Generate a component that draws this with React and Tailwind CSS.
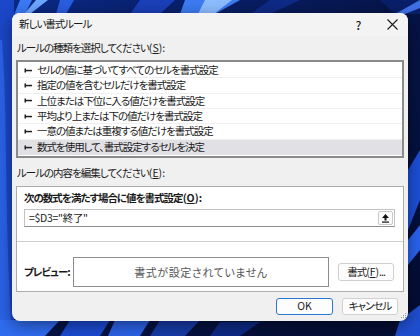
import React from "react";

const font = "[font-family:'Noto_Sans_CJK_JP','Noto_Sans',sans-serif] [font-feature-settings:'palt'_1] tracking-[-1px]";

function Arrow() {
  return (
    <svg width="9" height="7" viewBox="0 0 9 7" className="shrink-0">
      <rect x="0.5" y="1.5" width="1.5" height="4" fill="#1f1f1f" />
      <rect x="1" y="2.8" width="7" height="1.5" fill="#1f1f1f" />
    </svg>
  );
}

function Key({ k }) {
  return (
    <span className="tracking-normal">
      (<span className="underline">{k}</span>)
    </span>
  );
}

const rules = [
  "セルの値に基づいてすべてのセルを書式設定",
  "指定の値を含むセルだけを書式設定",
  "上位または下位に入る値だけを書式設定",
  "平均より上または下の値だけを書式設定",
  "一意の値または重複する値だけを書式設定",
  "数式を使用して、書式設定するセルを決定",
];

function Wallpaper() {
  return (
    <svg className="absolute inset-0" width="420" height="336" viewBox="0 0 420 336">
      <defs>
        <linearGradient id="bg" x1="0" y1="0" x2="1" y2="1">
          <stop offset="0" stopColor="#0b2a8a" />
          <stop offset="0.5" stopColor="#061447" />
          <stop offset="1" stopColor="#040d33" />
        </linearGradient>
      </defs>
      <rect width="420" height="336" fill="url(#bg)" />
      <path d="M0 0 L14 0 L14 336 L0 336 Z" fill="#1b47c9" />
      <path d="M2 40 C8 120 4 200 12 336 L0 336 L0 40 Z" fill="#2b62e8" />
      <path d="M20 0 L32 0 L12 40 L12 20 Z" fill="#3a7af5" />
      <path d="M36 0 L48 0 L30 14 L24 14 Z" fill="#6da6ff" />
      <path d="M60 0 L74 0 L66 14 L56 14 Z" fill="#2a5ee0" />
      <path d="M140 0 L175 0 L160 14 L130 14 Z" fill="#1a3fb8" />
      <path d="M185 0 L240 0 L215 14 L180 14 Z" fill="#3c7bf2" />
      <path d="M205 0 L232 0 L214 14 L198 14 Z" fill="#8dbdff" />
      <path d="M270 0 L300 0 L270 14 L250 14 Z" fill="#0e2a86" />
      <path d="M380 0 L420 0 L420 14 L395 14 Z" fill="#0a1f6a" />
      <path d="M395 14 L420 0 L420 8 L405 14 Z" fill="#3f6fe6" />
      <path d="M408 170 L420 150 L420 200 L408 230 Z" fill="#1d4fd8" />
      <path d="M408 240 L420 225 L420 250 L408 265 Z" fill="#2a63ee" />
      <path d="M0 320 L60 320 L45 336 L0 336 Z" fill="#2f6cf0" />
      <path d="M70 320 L110 320 L100 336 L60 336 Z" fill="#1c4bd3" />
      <path d="M115 320 L150 320 L140 336 L108 336 Z" fill="#2c63e8" />
      <path d="M160 320 L200 320 L185 336 L150 336 Z" fill="#163ca8" />
      <path d="M220 322 L260 322 L240 336 L210 336 Z" fill="#0e2a86" />
      <path d="M400 320 L420 305 L420 336 L395 336 Z" fill="#1f4fd0" />
    </svg>
  );
}

export default function App() {
  return (
    <div className={`relative w-[420px] h-[336px] overflow-hidden ${font} text-[10.5px] text-[#1a1a1a] whitespace-nowrap`}>
      <Wallpaper />
      <div className="relative pt-[13px] pl-[12px]">
        <div className="w-[396px] h-[308px] rounded-[8px] bg-[#f0f0f0] shadow-[0_4px_16px_rgba(0,0,0,0.45)] flex flex-col overflow-hidden">
          <div className="h-[23px] shrink-0 flex items-center bg-[#f3f3f3] pl-[7px]">
            <span className="leading-none">新しい書式ルール</span>
            <span className="ml-auto w-[16px] text-center leading-none text-[12px] font-medium">?</span>
            <span className="ml-[18px] mr-[8px] w-[16px] flex justify-center">
              <svg width="11" height="11" viewBox="0 0 11 11">
                <path d="M0.5 0.5 L10.5 10.5 M10.5 0.5 L0.5 10.5" stroke="#1a1a1a" strokeWidth="1.1" />
              </svg>
            </span>
          </div>
          <div className="flex flex-col px-[4px]">
            <div className="h-[24px] flex items-center pl-[1px] leading-none">
              ルールの種類を選択してください<Key k="S" />:
            </div>
            <div className="h-[98px] border-2 border-[#8a8a8a] bg-white flex flex-col pt-[1px] pb-[1px]">
              {rules.map((r, i) => (
                <div
                  key={i}
                  className={`h-[15.5px] flex items-center gap-[4px] pl-[6px] leading-none ${
                    i === 5 ? "bg-[#e1e0e5]" : "border-b border-[#f0f0f0]"
                  }`}
                >
                  <Arrow />
                  <span>{r}</span>
                </div>
              ))}
            </div>
            <div className="h-[28px] flex items-center pl-[1px] pt-[3px] leading-none">
              ルールの内容を編集してください<Key k="E" />:
            </div>
            <div className="h-[106px] border border-[#adadad] bg-white flex flex-col">
              <div className="h-[22px] flex items-center pl-[7px] pt-[1px] font-bold leading-none">
                次の数式を満たす場合に値を書式設定<Key k="O" />:
              </div>
              <div className="ml-[7px] mr-[8px] h-[18px] border border-[#c2c2c2] border-b-[#8e8e8e] flex items-center pl-[4px] pr-[1px]">
                <span className="leading-none tracking-[-0.3px]">=$D3="終了"</span>
                <div className="ml-auto w-[15px] h-[14px] border border-[#c8c8c8] rounded-[2px] bg-[#fbfbfb] flex items-center justify-center">
                  <svg width="9" height="10" viewBox="0 0 9 10">
                    <path d="M4.5 1 L8 5 L5.5 5 L5.5 7.5 L3.5 7.5 L3.5 5 L1 5 Z" fill="#111" />
                    <rect x="1" y="8.5" width="7" height="1.2" fill="#111" />
                  </svg>
                </div>
              </div>
              <div className="mt-[14px] h-px bg-[#cfcfcf]" />
              <div className="mt-[15px] flex items-start pl-[7px]">
                <div className="w-[49px] h-[30px] flex items-center font-bold leading-none">プレビュー:</div>
                <div className="w-[256px] h-[30px] border border-[#8c8c8c] flex items-center justify-center text-[#555] text-[11px] tracking-[0.6px] leading-none">
                  書式が設定されていません
                </div>
                <button className="ml-[9px] mt-[6px] w-[56px] h-[18px] rounded-[3px] border border-[#cfcfcf] bg-[#fdfdfd] flex items-center justify-center leading-none">
                  書式<Key k="F" />...
                </button>
              </div>
            </div>
            <div className="flex justify-end gap-[9px] pr-[6px] mt-[6px]">
              <button className="w-[57px] h-[17px] rounded-[3px] border border-[#2a78d0] bg-[#fdfdfd] flex items-center justify-center leading-none tracking-normal">
                OK
              </button>
              <button className="w-[56px] h-[17px] rounded-[3px] border border-[#d0d0d0] bg-[#fdfdfd] flex items-center justify-center leading-none">
                キャンセル
              </button>
            </div>
          </div>
        </div>
      </div>
      <svg className="absolute left-[401px] top-[313px]" width="6" height="6" viewBox="0 0 6 6">
        <rect x="4" y="0" width="1" height="1" fill="#9a9a9a" />
        <rect x="2" y="2" width="1" height="1" fill="#9a9a9a" />
        <rect x="4" y="2" width="1" height="1" fill="#9a9a9a" />
        <rect x="0" y="4" width="1" height="1" fill="#9a9a9a" />
        <rect x="2" y="4" width="1" height="1" fill="#9a9a9a" />
        <rect x="4" y="4" width="1" height="1" fill="#9a9a9a" />
      </svg>
    </div>
  );
}
